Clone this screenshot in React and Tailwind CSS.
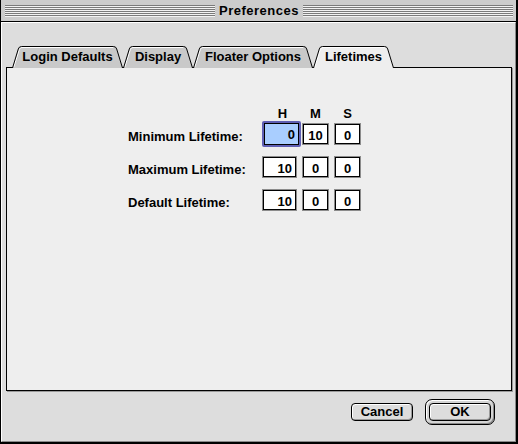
import React from "react";

const FONT = "font-['Liberation_Sans',Arial,sans-serif] font-bold";

const STRIPES =
  "bg-[repeating-linear-gradient(to_bottom,#7a7a7a_0px,#7a7a7a_1px,#f2f2f2_1px,#f2f2f2_2px)]";

const TABS = [
  { label: "Login Defaults", w: 111, cls: "w-[111px]" },
  { label: "Display", w: 70, cls: "w-[70px]" },
  { label: "Floater Options", w: 120, cls: "w-[120px]" },
  { label: "Lifetimes", w: 81, cls: "w-[81px]", selected: true },
];

const ROWS = [
  { label: "Minimum Lifetime:", h: "0", m: "10", s: "0", focused: true },
  { label: "Maximum Lifetime:", h: "10", m: "0", s: "0" },
  { label: "Default Lifetime:", h: "10", m: "0", s: "0" },
];

function Tab({ label, w, cls, selected }) {
  const h = 22;
  // outline of the tab: slanted sides, slightly rounded top corners
  const edge = `M0.5 ${h} L6.3 3 Q7 0.5 9.5 0.5 L${w - 9.5} 0.5 Q${w - 7} 0.5 ${w - 6.3} 3 L${w - 0.5} ${h}`;
  const shine = `M1.8 ${h - 1} L7.4 3.4 Q7.9 1.5 9.8 1.5 L${w - 10} 1.5`;
  return (
    <div className={`relative h-[22px] flex items-center justify-center ${cls} ${selected ? "z-10" : ""}`}>
      <svg className="absolute inset-0" width={w} height={h} viewBox={`0 0 ${w} ${h}`}>
        <path d={`${edge} Z`} fill={selected ? "#eeeeee" : "#c9c9c9"} stroke="none" />
        <path d={shine} fill="none" stroke="#ffffff" strokeWidth="1" />
        <path d={edge} fill="none" stroke="#000000" strokeWidth="1" />
      </svg>
      <span className="relative text-[13px] leading-[16px] text-black -mt-[1px]">{label}</span>
    </div>
  );
}

function Field({ value, wide, focused }) {
  const size = wide ? "w-[35px]" : "w-[27px]";
  const align = wide ? "justify-end pr-[3px]" : "justify-center";
  if (focused) {
    return (
      <div className={`${size} h-[22px] rounded-[2px] border-2 border-[#5f5fb4] -my-[2px] box-content`}>
        <div className={`h-full flex items-start pt-[3px] ${align} border border-black bg-[#a9ceff] text-[13px]`}>
          {value}
        </div>
      </div>
    );
  }
  return (
    <div className={`${size} h-[22px] border border-[#8c8c8c] bg-white`}>
      <div className={`h-full flex items-start pt-[3px] ${align} border border-black text-[13px]`}>{value}</div>
    </div>
  );
}

function Button({ children }) {
  return (
    <div className="w-[62px] h-[18px] rounded-[4px] border border-black bg-[#dddddd] shadow-[inset_1px_1px_0_#ffffff,inset_-1px_-1px_0_#9a9a9a] flex items-center justify-center text-[13px] leading-[16px]">
      {children}
    </div>
  );
}

export default function App() {
  return (
    <div className={`${FONT} w-[518px] h-[444px] flex flex-col border-l border-r-2 border-b-2 border-black bg-[#dddddd] text-black`}>
      {/* title bar */}
      <div className="h-[22px] shrink-0 flex items-center bg-[#cccccc] border-b border-black pl-[4px] pr-[3px]">
        <div className={`flex-1 h-[12px] ${STRIPES}`} />
        <div className="px-[4px] text-[13px] leading-[16px] tracking-[0.5px]">Preferences</div>
        <div className={`flex-1 h-[12px] ${STRIPES}`} />
      </div>

      {/* window body */}
      <div className="flex-1 flex flex-col border-t border-l border-white border-r border-b border-r-[#8a8a8a] border-b-[#8a8a8a] pt-[23px]">
        <div className="flex h-[22px] ml-[10px]">
          {TABS.map((t) => (
            <Tab key={t.label} {...t} />
          ))}
        </div>

        <div className="ml-[4px] -mt-[1px] w-[506px] h-[324px] border border-black bg-[#eeeeee] shadow-[1px_1px_0_#9a9a9a] pt-[38px] pl-[121px]">
          <div className="grid grid-cols-[129px_35px_27px_27px] gap-x-[5px] text-[13px] leading-[16px]">
            <div />
            <div className="text-center pl-[6px]">H</div>
            <div className="text-center">M</div>
            <div className="text-center">S</div>
          </div>
          <div className="mt-[1px] grid grid-cols-[129px_35px_27px_27px] gap-x-[5px] gap-y-[11px] items-center text-[13px] leading-[16px]">
            {ROWS.map((r) => (
              <React.Fragment key={r.label}>
                <div className="pt-[6px]">{r.label}</div>
                <Field value={r.h} wide focused={r.focused} />
                <Field value={r.m} />
                <Field value={r.s} />
              </React.Fragment>
            ))}
          </div>
        </div>

        <div className="mt-[8px] flex items-center justify-end gap-[12px] pr-[20px]">
          <Button>Cancel</Button>
          <div className="rounded-[7px] border border-black bg-[#d4d4d4] shadow-[inset_1px_1px_0_#ffffff,inset_-1px_-1px_0_#8a8a8a] p-[3px]">
            <Button>OK</Button>
          </div>
        </div>
      </div>
    </div>
  );
}
